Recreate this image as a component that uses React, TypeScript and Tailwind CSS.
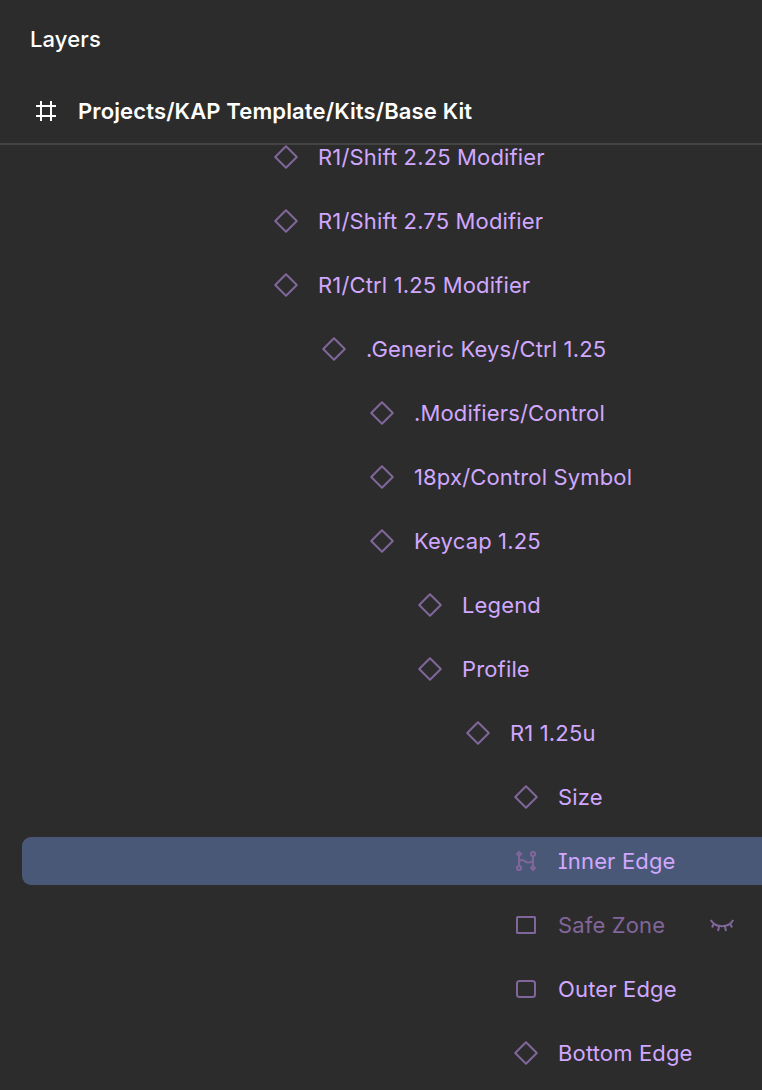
import type { ReactNode } from "react";

type IconKind = "instance" | "vector" | "rect" | "rounded";

interface Layer {
  name: string;
  depth: number;
  icon: IconKind;
  selected?: boolean;
  hidden?: boolean;
}

const layers: Layer[] = [
  { name: "R1/Shift 2.25 Modifier", depth: 0, icon: "instance" },
  { name: "R1/Shift 2.75 Modifier", depth: 0, icon: "instance" },
  { name: "R1/Ctrl 1.25 Modifier", depth: 0, icon: "instance" },
  { name: ".Generic Keys/Ctrl 1.25", depth: 1, icon: "instance" },
  { name: ".Modifiers/Control", depth: 2, icon: "instance" },
  { name: "18px/Control Symbol", depth: 2, icon: "instance" },
  { name: "Keycap 1.25", depth: 2, icon: "instance" },
  { name: "Legend", depth: 3, icon: "instance" },
  { name: "Profile", depth: 3, icon: "instance" },
  { name: "R1 1.25u", depth: 4, icon: "instance" },
  { name: "Size", depth: 5, icon: "instance" },
  { name: "Inner Edge", depth: 5, icon: "vector", selected: true },
  { name: "Safe Zone", depth: 5, icon: "rect", hidden: true },
  { name: "Outer Edge", depth: 5, icon: "rounded" },
  { name: "Bottom Edge", depth: 5, icon: "instance" },
];

const indents = ["pl-[248px]", "pl-[296px]", "pl-[344px]", "pl-[392px]", "pl-[440px]", "pl-[488px]"];

const glyphs: Record<IconKind, ReactNode> = {
  instance: <path d="M16 5.2 26.8 16 16 26.8 5.2 16Z" strokeLinejoin="round" />,
  vector: (
    <>
      <path d="M9 9v12M23 11v12" />
      <path d="M9 17.500c0-1.600 1.500-2.700 3.200-2.400 2.600.5 3.800 2.600 6.800 2.400 2.300-.2 4-1.600 4-3.700" />
      <circle cx="23" cy="9" r="2.100" />
      <circle cx="9" cy="23" r="2.100" />
      <path
        d="M9 6.500 11.500 9 9 11.500 6.500 9zM23 20.500 25.500 23 23 25.500 20.500 23z"
        fill="currentColor"
        strokeWidth="1.3"
        strokeLinejoin="round"
      />
    </>
  ),
  rect: <rect x="7" y="8" width="18" height="16" rx="0.5" />,
  rounded: <rect x="7" y="8" width="18" height="16" rx="2.5" />,
};

function LayerIcon({ kind }: { kind: IconKind }) {
  return (
    <svg className="size-8 shrink-0 text-[#80669a]" viewBox="0 0 32 32" fill="none" stroke="currentColor" strokeWidth="2">
      {glyphs[kind]}
    </svg>
  );
}

function ClosedEye() {
  return (
    <svg className="mr-6 ml-auto size-8 shrink-0 text-[#80669a]" viewBox="0 0 32 32" fill="none" stroke="currentColor" strokeWidth="2">
      <path d="M4.800 11C7 15 11 17.200 16 17.200S25 15 27.200 11M8 14.500 6 18.500M13.200 17 12 22M18.800 17 20 22M24 14.500 26 18.500" />
    </svg>
  );
}

function LayerRow({ layer }: { layer: Layer }) {
  return (
    <li className="flex h-16 shrink-0 items-center pl-[22px]">
      <div
        className={`flex h-12 w-full items-center gap-4 rounded-l-[9px] ${indents[layer.depth]} ${
          layer.selected ? "bg-[#4a5878]" : ""
        }`}
      >
        <LayerIcon kind={layer.icon} />
        <span className={`whitespace-nowrap ${layer.hidden ? "text-[#80669a]" : "text-[#d1a8ff]"}`}>{layer.name}</span>
        {layer.hidden && <ClosedEye />}
      </div>
    </li>
  );
}

export default function App() {
  return (
    <div className="flex h-[1090px] w-full flex-col overflow-hidden bg-[#2c2c2c] font-['Inter',sans-serif] text-[22px] leading-8 [font-optical-sizing:none] [font-feature-settings:'cv08']">
      <header className="flex shrink-0 flex-col border-b-2 border-[#444444] tracking-[0.13px] text-white">
        <h1 className="flex h-[79px] items-center pb-px pl-[30px] font-medium">Layers</h1>
        <div className="flex h-16 items-center gap-4 pl-[30px] font-semibold">
          <svg className="size-8 shrink-0" viewBox="0 0 32 32" fill="none" stroke="currentColor" strokeWidth="2">
            <path d="M11 6v20M21 6v20M6 11h20M6 21h20" />
          </svg>
          <span className="whitespace-nowrap">Projects/KAP Template/Kits/Base Kit</span>
        </div>
      </header>
      <div className="min-h-0 flex-1 overflow-hidden">
        <ul className="-mt-5 flex flex-col font-[370] tracking-[0.15px]">
          {layers.map((layer) => (
            <LayerRow key={layer.name} layer={layer} />
          ))}
        </ul>
      </div>
    </div>
  );
}
